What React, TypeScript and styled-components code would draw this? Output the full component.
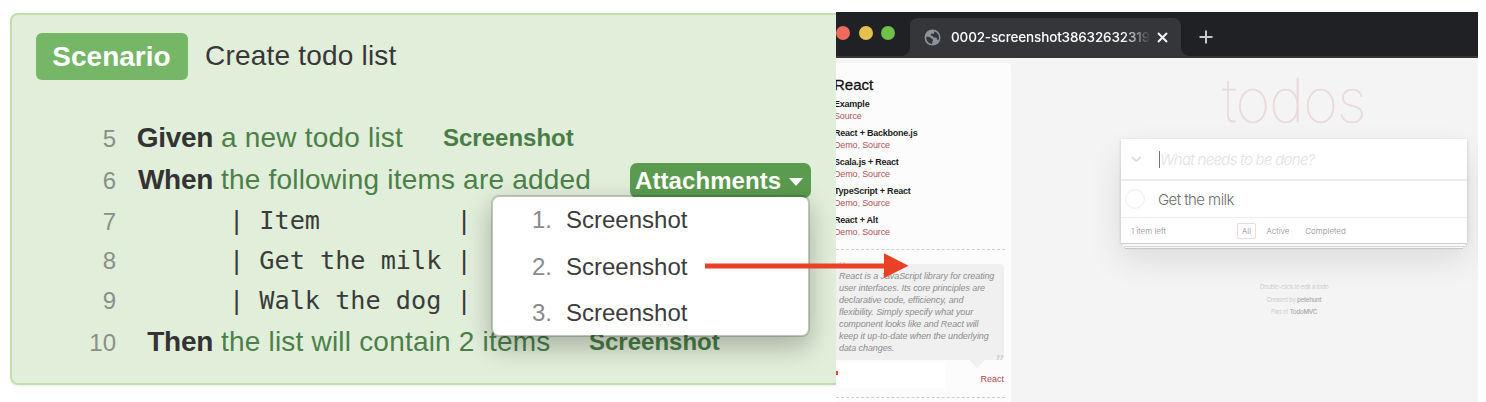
import React from "react";
import styled, { createGlobalStyle } from "styled-components";

const Global = createGlobalStyle`
  html, body { margin: 0; background: #fff; }
  body { font-family: "Liberation Sans", Helvetica, Arial, sans-serif; }
  *, *::before, *::after { box-sizing: border-box; }
`;

const Page = styled.main`
  position: relative;
  display: flex;
  align-items: flex-start;
  width: 1486px;
  height: 402px;
  overflow: hidden;
`;

/* ---------- feature report ---------- */

const Report = styled.section`
  flex: none;
  width: 836px;
  height: 402px;
  padding: 13px 0 0 10px;
  overflow: hidden;
`;

const Card = styled.div`
  width: 840px;
  height: 372px;
  padding: 18px 0 0 24px;
  border: 2px solid #bfdfae;
  border-radius: 8px;
  background: #e1eeda;
  box-shadow: 0 1px 3px rgba(0, 0, 0, 0.08);
`;

const Heading = styled.header`
  display: flex;
  align-items: center;
  gap: 17px;
  height: 47px;
  color: #383838;
  font-size: 28px;
  letter-spacing: 0.2px;
`;

const Tag = styled.span`
  display: flex;
  align-items: center;
  justify-content: center;
  width: 152px;
  height: 47px;
  padding-right: 1px;
  border-radius: 6px;
  background: #75b667;
  color: #fff;
  font-weight: 700;
  letter-spacing: 0;
`;

const Title = styled.span`
  position: relative;
  top: -1px;
`;

const Steps = styled.div`
  display: flex;
  flex-direction: column;
  margin-top: 37px;
`;

const Line = styled.div<{ $h: number }>`
  display: flex;
  align-items: center;
  height: ${(p) => p.$h}px;
  white-space: pre;
`;

const LineNo = styled.span`
  width: 80px;
  padding-top: 2px;
  color: #8b8f8a;
  font-size: 24px;
  text-align: right;
`;

const Keyword = styled.b`
  width: 97px;
  color: #333;
  font-size: 28px;
  letter-spacing: -0.3px;
  text-align: right;
`;

const StepText = styled.span<{ $w: number }>`
  width: ${(p) => p.$w}px;
  margin-left: 8px;
  color: #4c8048;
  font-size: 28px;
  letter-spacing: 0.2px;
`;

const Link = styled.b`
  margin-left: -1px;
  color: #4a7d46;
  font-size: 24px;
`;

const TableRow = styled.span`
  padding-left: 113px;
  color: #3a3c39;
  font-family: "DejaVu Sans Mono", Menlo, monospace;
  font-size: 25.2px;
`;

const MenuAnchor = styled.div`
  position: relative;
`;

const MenuButton = styled.div`
  display: flex;
  align-items: center;
  gap: 8px;
  width: 181px;
  height: 35px;
  padding: 1px 0 0 5px;
  border-radius: 7px;
  background: #5b9b4f;
  color: #fff;
  font-size: 24px;
  font-weight: 700;
  letter-spacing: 0.08px;
`;

const Caret = styled.i`
  margin-top: 2px;
  border: 7.5px solid transparent;
  border-top: 8px solid #fff;
  border-bottom: 0;
`;

const Menu = styled.ol`
  position: absolute;
  z-index: 2;
  top: 32px;
  right: 1px;
  width: 319px;
  height: 142px;
  margin: 0;
  padding: 0;
  list-style: none;
  border: 2px solid rgba(0, 0, 0, 0.16);
  border-radius: 8px;
  background: #fff;
  background-clip: padding-box;
  box-shadow: 0 10px 26px rgba(0, 0, 0, 0.26);
`;

const MenuItem = styled.li`
  display: flex;
  align-items: center;
  height: 46.7px;
  color: #3c3c3c;
  font-size: 24px;
`;

const MenuNo = styled.span`
  width: 73px;
  padding-left: 39px;
  color: #8a8a8a;
`;

/* ---------- browser window ---------- */

const Browser = styled.section`
  flex: none;
  width: 642px;
  height: 390px;
  margin-top: 12px;
  overflow: hidden;
  background: #f4f4f4;
`;

const TabBar = styled.div`
  display: flex;
  align-items: flex-end;
  height: 46px;
  border-bottom: 2px solid #35363a;
  background: #202124;
`;

const Lights = styled.div`
  display: flex;
  gap: 8.5px;
  width: 74px;
  height: 44px;
  padding-top: 14px;
`;

const Light = styled.i<{ $c: string }>`
  flex: none;
  width: 14px;
  height: 14px;
  border-radius: 50%;
  background: ${(p) => p.$c};
`;

const Tab = styled.div`
  position: relative;
  display: flex;
  align-items: center;
  width: 271px;
  height: 38px;
  padding-left: 14px;
  border-radius: 8px 8px 0 0;
  background: #35363a;
  &::before,
  &::after {
    content: "";
    position: absolute;
    bottom: 0;
    width: 8px;
    height: 8px;
  }
  &::before {
    left: -8px;
    background: radial-gradient(circle at 0 0, transparent 7.5px, #35363a 8px);
  }
  &::after {
    right: -8px;
    background: radial-gradient(circle at 100% 0, transparent 7.5px, #35363a 8px);
  }
`;

const TabTitle = styled.span`
  width: 198px;
  margin: 0 8px 0 10px;
  overflow: hidden;
  color: #fff;
  font-family: Inter, sans-serif;
  font-size: 13.5px;
  font-weight: 500;
  letter-spacing: -0.15px;
  white-space: nowrap;
  mask-image: linear-gradient(90deg, #000 172px, transparent 200px);
`;

const Plus = styled.svg`
  margin: 0 0 12px 18px;
`;

const Content = styled.div`
  display: flex;
  height: 344px;
`;

const Sidebar = styled.aside`
  width: 175px;
  height: 345px;
  margin-top: 5px;
  padding-top: 11px;
  overflow: hidden;
  border-radius: 0 4px 0 0;
  background: #fcfcfc;
`;

const SideTitle = styled.h3`
  height: 20px;
  margin: 0 0 4px -2px;
  color: #111;
  font-size: 15px;
  font-weight: 400;
  line-height: 22px;
  -webkit-text-stroke: 0.3px #111;
`;

const Example = styled.div`
  margin: 0 0 5px -2px;
  color: #b4525a;
  font-size: 9px;
  line-height: 12px;
  letter-spacing: -0.13px;
  white-space: nowrap;
`;

const ExampleName = styled.b`
  display: block;
  color: #1c1c1c;
  letter-spacing: -0.23px;
`;

const Comma = styled.span`
  color: #999;
`;

const Rule = styled.hr<{ $top: number }>`
  width: 169px;
  margin: ${(p) => p.$top}px 0 0;
  border: 0;
  border-top: 1px dashed #cfcfcf;
`;

const Quote = styled.blockquote`
  position: relative;
  width: 168px;
  height: 96px;
  margin: 14px 0 0;
  padding: 6px 0 0 3px;
  border-radius: 0 4px 4px 0;
  background: #f0f0f0;
  color: #8c8c8c;
  font-size: 9px;
  font-style: italic;
  line-height: 12px;
  letter-spacing: -0.09px;
  white-space: nowrap;
  &::after {
    content: "";
    position: absolute;
    right: 19px;
    bottom: -8px;
    border: 8px solid transparent;
    border-top-color: #f0f0f0;
    border-bottom: 0;
  }
`;

const QuoteMark = styled.span<{ $x: number; $y: number }>`
  position: absolute;
  left: ${(p) => p.$x}px;
  top: ${(p) => p.$y}px;
  height: 11px;
  color: #cfcfcf;
  font-size: 22px;
  line-height: 22px;
`;

const Credit = styled.div`
  display: flex;
  align-items: center;
  width: 169px;
  height: 26px;
  margin-top: 2px;
  color: #ae4850;
  font-size: 9px;
`;

const RedMark = styled.i`
  width: 2px;
  height: 4px;
  margin-top: -5px;
  background: #e8452c;
`;

const Blank = styled.div`
  width: 107px;
  height: 26px;
  background: #fff;
`;

const CreditName = styled.span`
  margin: 7px 1px 0 auto;
`;

const TodoColumn = styled.div`
  display: flex;
  flex-direction: column;
  width: 346px;
  margin-left: 110px;
`;

const Logo = styled.h1`
  height: 81px;
  margin: 0;
  color: #ead9db;
  font-family: Inter, "Helvetica Neue", sans-serif;
  font-size: 60px;
  font-weight: 100;
  line-height: 84px;
  letter-spacing: -0.9px;
  text-align: center;
  -webkit-text-stroke: 0.4px #ead9db;
`;

const TodoCard = styled.div`
  height: 104px;
  background: #fff;
  box-shadow: 0 1px 3px rgba(0, 0, 0, 0.18), 0 16px 32px rgba(0, 0, 0, 0.11);
`;

const TodoRow = styled.div<{ $h: number; $line: number }>`
  display: flex;
  align-items: center;
  height: ${(p) => p.$h}px;
  border-bottom: ${(p) => p.$line}px solid #ededed;
`;

const Lead = styled.span<{ $pad: number }>`
  display: flex;
  width: 37px;
  padding-left: ${(p) => p.$pad}px;
`;

const Cursor = styled.i`
  width: 1px;
  height: 17px;
  margin-left: 1px;
  background: #777;
`;

const Placeholder = styled.span`
  color: #e2e2e2;
  font-family: Inter, sans-serif;
  font-size: 15px;
  font-style: italic;
  font-weight: 300;
  letter-spacing: -0.7px;
`;

const TodoText = styled.span`
  color: #6c6c6c;
  font-family: Inter, sans-serif;
  font-size: 15px;
  font-weight: 300;
  letter-spacing: -0.58px;
`;

const TodoFooter = styled.footer`
  display: flex;
  align-items: center;
  height: 25px;
  padding-left: 10px;
  color: #8c8c8c;
  font-family: Inter, sans-serif;
  font-size: 8px;
  font-weight: 300;
  box-shadow: 0 1px 0 #cfcfcf, 0 5px 0 -2px #f8f8f8, 0 6px 0 -2px #d6d6d6,
    0 9px 0 -4px #f8f8f8, 0 10px 1px -4px #c8c8c8;
`;

const Count = styled.span`
  width: 106px;
`;

const Filter = styled.span<{ $on?: boolean; $w: number }>`
  display: flex;
  align-items: center;
  justify-content: center;
  width: ${(p) => p.$w}px;
  height: 16px;
  border: 1px solid ${(p) => (p.$on ? "#f2d9db" : "transparent")};
  border-radius: 2px;
`;

const Info = styled.div`
  margin-top: 38px;
  color: #c4c4c4;
  font-family: Inter, sans-serif;
  font-size: 6.2px;
  font-weight: 300;
  line-height: 12.5px;
  letter-spacing: -0.26px;
  text-align: center;
  b {
    color: #a8a8a8;
    font-weight: 500;
  }
`;

const Arrow = styled.svg`
  position: absolute;
  z-index: 3;
  left: 705px;
  top: 252px;
`;

const examples = [
  "React + Backbone.js",
  "Scala.js + React",
  "TypeScript + React",
  "React + Alt",
];

const quoteLines = [
  "React is a JavaScript library for creating",
  "user interfaces. Its core principles are",
  "declarative code, efficiency, and",
  "flexibility. Simply specify what your",
  "component looks like and React will",
  "keep it up-to-date when the underlying",
  "data changes.",
];

const table = [
  { no: 7, h: 39, text: "| Item         |" },
  { no: 8, h: 40, text: "| Get the milk |" },
  { no: 9, h: 40, text: "| Walk the dog |" },
];

function FeatureReport() {
  return (
    <Report>
      <Card>
        <Heading>
          <Tag>Scenario</Tag>
          <Title>Create todo list</Title>
        </Heading>
        <Steps>
          <Line $h={42}>
            <LineNo>5</LineNo>
            <Keyword>Given</Keyword>
            <StepText $w={223}>a new todo list</StepText>
            <Link>Screenshot</Link>
          </Line>
          <Line $h={42}>
            <LineNo>6</LineNo>
            <Keyword>When</Keyword>
            <StepText $w={409}>the following items are added</StepText>
            <MenuAnchor>
              <MenuButton>
                Attachments
                <Caret />
              </MenuButton>
              <Menu>
                {[1, 2, 3].map((n) => (
                  <MenuItem key={n}>
                    <MenuNo>{n}.</MenuNo>
                    Screenshot
                  </MenuItem>
                ))}
              </Menu>
            </MenuAnchor>
          </Line>
          {table.map((r) => (
            <Line key={r.no} $h={r.h}>
              <LineNo>{r.no}</LineNo>
              <TableRow>{r.text}</TableRow>
            </Line>
          ))}
          <Line $h={43}>
            <LineNo>10</LineNo>
            <Keyword>Then</Keyword>
            <StepText $w={369}>the list will contain 2 items</StepText>
            <Link>Screenshot</Link>
          </Line>
        </Steps>
      </Card>
    </Report>
  );
}

function ExamplesSidebar() {
  return (
    <Sidebar>
      <SideTitle>React</SideTitle>
      <Example>
        <ExampleName>Example</ExampleName>
        Source
      </Example>
      {examples.map((name) => (
        <Example key={name}>
          <ExampleName>{name}</ExampleName>
          Demo<Comma>,</Comma> Source
        </Example>
      ))}
      <Rule $top={11} />
      <Quote>
        <QuoteMark $x={1} $y={-5}>“</QuoteMark>
        {quoteLines.map((l) => (
          <div key={l}>{l}</div>
        ))}
        <QuoteMark $x={159} $y={88}>”</QuoteMark>
      </Quote>
      <Credit>
        <RedMark />
        <Blank />
        <CreditName>React</CreditName>
      </Credit>
      <Rule $top={9} />
    </Sidebar>
  );
}

function TodoApp() {
  return (
    <TodoColumn>
      <Logo>todos</Logo>
      <TodoCard>
        <TodoRow $h={42} $line={2}>
          <Lead $pad={10}>
            <svg width="11" height="7" viewBox="0 0 11 7" fill="none" stroke="#dedede" strokeWidth="2">
              <path d="M0.8 1.2 5.3 5 9.8 1.2" />
            </svg>
          </Lead>
          <Cursor />
          <Placeholder>What needs to be done?</Placeholder>
        </TodoRow>
        <TodoRow $h={37} $line={1}>
          <Lead $pad={4}>
            <svg width="20" height="20" viewBox="0 0 20 20" fill="none" stroke="#ececec">
              <circle cx="10" cy="10" r="9.3" />
            </svg>
          </Lead>
          <TodoText>Get the milk</TodoText>
        </TodoRow>
        <TodoFooter>
          <Count>1 item left</Count>
          <Filter $on $w={19}>All</Filter>
          <Filter $w={44}>Active</Filter>
          <Filter $w={51}>Completed</Filter>
        </TodoFooter>
      </TodoCard>
      <Info>
        <div>Double-click to edit a todo</div>
        <div>Created by <b>petehunt</b></div>
        <div>Part of <b>TodoMVC</b></div>
      </Info>
    </TodoColumn>
  );
}

function BrowserWindow() {
  return (
    <Browser>
      <TabBar>
        <Lights>
          <Light $c="#ee6a5f" />
          <Light $c="#e2c14c" />
          <Light $c="#6fc149" />
        </Lights>
        <Tab>
          <svg width="17" height="17" viewBox="0 0 17 17">
            <circle cx="8.5" cy="8.5" r="8" fill="#8d939b" />
            <path
              d="M2.200 7.800C4.500 7.800 6.400 8 7.200 9.300c.4.900 1.900.6 1.900 1.800 0 .9-.8 1-.8 1.800v2C4.700 15 2 11.800 2.200 7.800ZM10.300 2.200v1.300c0 .8-.6 1.300-1.500 1.300H7.300c-.5 0-.6.6-.6 1.200 0 .8 1 .7 1.700.9.900.2.6 1.600 1.700 1.600h1.600c.8 0 1.300.6 1.300 1.500 0 .7.700.9 1.300 1.300C16.300 8.100 14.200 3.600 10.300 2.200Z"
              fill="#35363a"
            />
          </svg>
          <TabTitle>0002-screenshot38632632319</TabTitle>
          <svg width="11" height="11" viewBox="0 0 11 11" stroke="#f4f4f4" strokeWidth="2">
            <path d="M1 1 10 10M10 1 1 10" />
          </svg>
        </Tab>
        <Plus width="14" height="14" viewBox="0 0 14 14" stroke="#c6c8cb" strokeWidth="2">
          <path d="M7 0.500V13.500M0.500 7H13.500" />
        </Plus>
      </TabBar>
      <Content>
        <ExamplesSidebar />
        <TodoApp />
      </Content>
    </Browser>
  );
}

export default function App() {
  return (
    <>
      <Global />
      <Page>
        <FeatureReport />
        <BrowserWindow />
        <Arrow width="204" height="27" viewBox="0 0 204 27" fill="#ea4025">
          <path d="M0 11.500H179V1.200L203.500 13.800 179 26V16.500H0Z" />
        </Arrow>
      </Page>
    </>
  );
}
